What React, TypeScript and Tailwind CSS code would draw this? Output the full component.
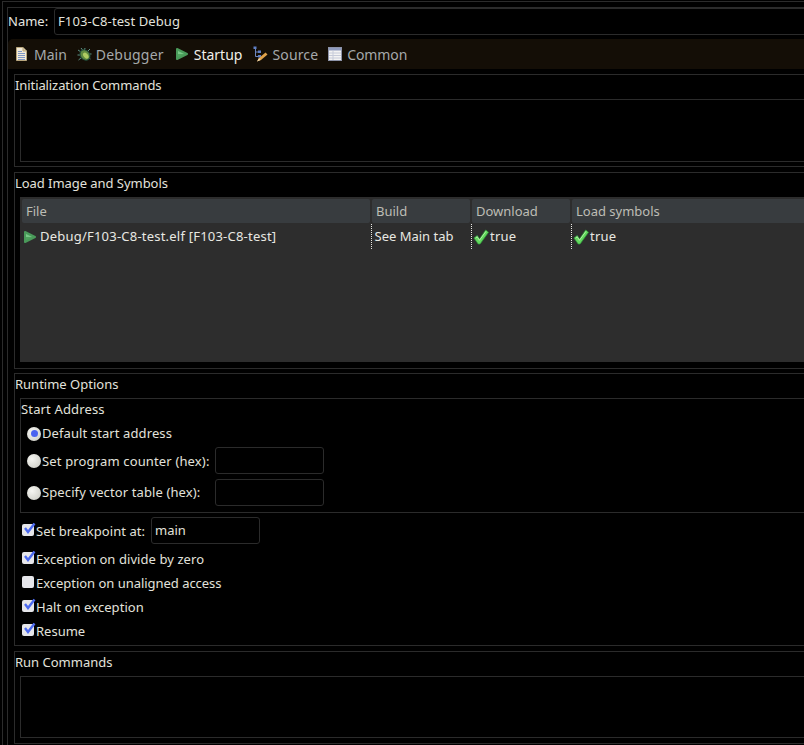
import React from "react";

const line = "border-[#2b2b2b]";

function DocIcon() {
  return (
    <svg width="11" height="14" viewBox="0 0 11 14" className="shrink-0">
      <path d="M0.5 0.5H7L10.5 4V13.5H0.5Z" fill="#f1ead8" stroke="#b9a67c" />
      <path d="M7 0.5V4H10.5" fill="#d8c9a4" stroke="#b9a67c" />
      <path d="M2 4.5H6M2 6.5H9M2 8.5H9M2 10.5H9M2 12.5H9" stroke="#7f97c4" strokeWidth="1" />
    </svg>
  );
}

function BugIcon() {
  return (
    <svg width="15" height="15" viewBox="0 0 15 15" className="shrink-0">
      <path d="M1 3L4 5M0.5 8H3.5M1.5 13L4.5 10.5M13 2L10.5 4.5M14.5 7H11.5M13.5 12L11 10.5M4 1L6 3.5M8 1L7.5 3" stroke="#5f9488" strokeWidth="1" fill="none" />
      <ellipse cx="8" cy="8" rx="4.6" ry="5.6" transform="rotate(-40 8 8)" fill="#5f8a40" stroke="#1f4a3a" />
      <ellipse cx="8.8" cy="8.6" rx="2.2" ry="3.4" transform="rotate(-40 8.8 8.6)" fill="#aecb62" />
    </svg>
  );
}

function PlayIcon() {
  return (
    <svg width="12" height="12" viewBox="0 0 12 12" className="shrink-0">
      <path d="M1 1L11 6L1 11Z" fill="#4fa35e" stroke="#4a9a5a" strokeWidth="2" strokeLinejoin="round" />
      <path d="M2 3L8 6L2 6Z" fill="#78c887" />
    </svg>
  );
}

function SourceIcon() {
  return (
    <svg width="15" height="16" viewBox="0 0 15 16" className="shrink-0">
      <path d="M2.5 2V10.5H5M2.5 6H5" stroke="#6c86c0" fill="none" />
      <rect x="0.5" y="0.5" width="3" height="2.5" fill="#5f7fc4" />
      <rect x="5" y="4.5" width="3" height="2.5" fill="#5f7fc4" />
      <rect x="5" y="9" width="3" height="2.5" fill="#5f7fc4" />
      <path d="M4 15.5L6 12L12.5 6.5L14.5 8.5L8 14Z" fill="#e0a24a" />
      <path d="M4 15.5L6 12L7.5 14Z" fill="#f0dcb4" />
    </svg>
  );
}

function TableIcon() {
  return (
    <svg width="14" height="14" viewBox="0 0 14 14" className="shrink-0">
      <rect x="0.5" y="0.5" width="13" height="13" fill="#f3f3f3" stroke="#8d93a8" />
      <rect x="1" y="1" width="12" height="2.5" fill="#8f9bbd" />
      <path d="M1 6H13M1 8.5H13M1 11H13M5 4V13" stroke="#c6cbd9" />
    </svg>
  );
}

function Check() {
  return (
    <svg width="16" height="16" viewBox="0 0 17 17" className="shrink-0">
      <path d="M1 9.5L4.5 7L7 10.5L13.5 1L16.5 3.5L7.5 16H5.5Z" fill="#63d85e" stroke="#2f9a3a" strokeWidth="0.8" strokeLinejoin="round" />
      <path d="M2.8 9.5L4.5 8.3L6.8 12L13.8 2.5" fill="none" stroke="#b4f2a8" strokeWidth="1" />
    </svg>
  );
}

function Radio({ on = false }: { on?: boolean }) {
  return (
    <span className="w-[14px] h-[14px] rounded-full shrink-0 flex items-center justify-center bg-[radial-gradient(circle_at_35%_35%,#f6f6f2,#c8c8c0)]">
      {on && <span className="w-[7px] h-[7px] rounded-full bg-[#4a63f0]" />}
    </span>
  );
}

function Checkbox({ on = false }: { on?: boolean }) {
  return (
    <span className="relative -top-[2px] w-[12px] h-[12px] rounded-[2px] shrink-0 bg-[#e6e6ea]">
      {on && (
        <svg width="13" height="13" viewBox="0 0 13 13" className="absolute left-[1px] top-[-2px]">
          <path d="M2 6L5 10L11.5 1.5" stroke="#4c6af0" strokeWidth="2.4" fill="none" />
        </svg>
      )}
    </span>
  );
}

function Field({ value = "" }: { value?: string }) {
  return (
    <div className={`w-[109px] h-[27px] rounded-[3px] border ${line} px-[3px] flex items-center shrink-0`}>{value}</div>
  );
}

function Section({ title, className, titleClass = "", children }: { title: string; className: string; titleClass?: string; children: React.ReactNode }) {
  return (
    <section className={`border ${line} border-r-0 pl-[5px] ${className}`}>
      <div className={`h-[21px] leading-[21px] -ml-[5px] ${titleClass}`}>{title}</div>
      {children}
    </section>
  );
}

function Cb({ label, on, labelClass = "" }: { label: string; on?: boolean; labelClass?: string }) {
  return (
    <div className="flex items-center gap-[2px] h-[24px] pl-[2px]">
      <Checkbox on={on} />
      <span className={labelClass}>{label}</span>
    </div>
  );
}

function Head({ label, w }: { label: string; w: string }) {
  return (
    <div className={`${w} h-[24px] shrink-0 mr-[2px] rounded-[2px] bg-[#383c3f] text-[#bdbdb5] pl-[4px] pt-[2px] flex items-center`}>{label}</div>
  );
}

export default function App() {
  return (
    <div className="w-[804px] h-[745px] overflow-hidden bg-black text-[#e2e2dc] text-[13px] font-['Noto_Sans',sans-serif] pt-[1px] pl-[2px]">
      <div className={`w-[900px] h-[800px] border-l border-t ${line} pl-[4px] pt-[5px]`}>
        <div className={`h-[800px] border-l border-t ${line}`}>
          <div className="flex items-center h-[27px]">
            <span className="w-[46px] text-[#e6e6e0]">Name:</span>
            <div className={`w-[800px] h-[27px] rounded-[3px] border ${line} px-[3px] flex items-center tracking-[0.1px]`}>F103-C8-test Debug</div>
          </div>
          <div className="mt-[4px] h-[30px] bg-[#140e06] rounded-tl-[5px] flex items-center pl-[8px] text-[#a5a9ab] text-[14px]">
            <div className="flex items-center gap-[7px] mr-[10px]"><DocIcon /><span>Main</span></div>
            <div className="flex items-center gap-[4px] mr-[12px]"><BugIcon /><span className="tracking-[0.2px]">Debugger</span></div>
            <div className="flex items-center gap-[6px] mr-[11px] text-[#f0f0ea]"><PlayIcon /><span>Startup</span></div>
            <div className="flex items-center gap-[4px] mr-[10px]"><SourceIcon /><span className="tracking-[0.15px]">Source</span></div>
            <div className="flex items-center gap-[5px]"><TableIcon /><span className="tracking-[-0.1px]">Common</span></div>
          </div>
          <div className="ml-[6px] mt-[5px] flex flex-col gap-[5px]">
            <Section title="Initialization Commands" titleClass="tracking-[-0.09px]" className="h-[93px]">
              <div className={`h-[63px] mt-[3px] border ${line}`} />
            </Section>
            <Section title="Load Image and Symbols" titleClass="tracking-[-0.05px]" className="h-[197px]">
              <div className="h-[165px] mt-[3px] bg-[#2d2d2d] pt-[2px]">
                <div className="flex pl-[2px] h-[25px]">
                  <Head label="File" w="w-[348px]" />
                  <Head label="Build" w="w-[98px]" />
                  <Head label="Download" w="w-[98px]" />
                  <Head label="Load symbols" w="w-[300px]" />
                </div>
                <div className="flex h-[25px] items-center text-[#e8e8e2]">
                  <div className="w-[351px] flex items-center gap-[4px] pl-[4px] shrink-0"><PlayIcon /><span className="tracking-[0.216px]">Debug/F103-C8-test.elf [F103-C8-test]</span></div>
                  <div className="w-[100px] h-[25px] flex items-center pl-[2.5px] shrink-0 border-l border-dotted border-[#e8e8e2]">See Main tab</div>
                  <div className="w-[100px] h-[25px] flex items-center gap-[1px] pl-[1px] shrink-0 border-l border-dotted border-[#e8e8e2]"><Check /><span className="tracking-[0.2px]">true</span></div>
                  <div className="w-[100px] h-[25px] flex items-center gap-[1px] pl-[1px] shrink-0 border-l border-dotted border-[#e8e8e2]"><Check /><span className="tracking-[0.2px]">true</span></div>
                </div>
              </div>
            </Section>
            <Section title="Runtime Options" className="h-[273px] -mt-[1px]">
              <div className={`h-[115px] mt-[3px] border ${line}`}>
                <div className="h-[21px] leading-[21px] tracking-[0.15px]">Start Address</div>
                <div className="flex items-center gap-[1px] h-[27px] pl-[6px]"><Radio on /><span className="tracking-[0.1px]">Default start address</span></div>
                <div className="flex items-center gap-[1px] h-[27px] pl-[6px]"><Radio /><span className="w-[172px] pt-[2px] tracking-[0.15px]">Set program counter (hex):</span><Field /></div>
                <div className="flex items-center gap-[1px] h-[27px] pl-[6px] mt-[5px]"><Radio /><span className="w-[172px] tracking-[0.11px]">Specify vector table (hex):</span><Field /></div>
              </div>
              <div className="flex items-center gap-[2px] h-[27px] pl-[2px] mt-[4px]">
                <span className="flex mt-[2px]"><Checkbox on /></span>
                <span className="w-[113px] pt-[2px] tracking-[0.06px]">Set breakpoint at:</span>
                <Field value="main" />
              </div>
              <div className="mt-[4px]">
                <Cb label="Exception on divide by zero" on labelClass="tracking-[0.07px]" />
                <Cb label="Exception on unaligned access" labelClass="tracking-[-0.03px]" />
                <Cb label="Halt on exception" on labelClass="tracking-[0.06px]" />
                <Cb label="Resume" on />
              </div>
            </Section>
            <Section title="Run Commands" className="h-[93px]">
              <div className={`h-[62px] mt-[3px] border ${line}`} />
            </Section>
          </div>
        </div>
      </div>
    </div>
  );
}
